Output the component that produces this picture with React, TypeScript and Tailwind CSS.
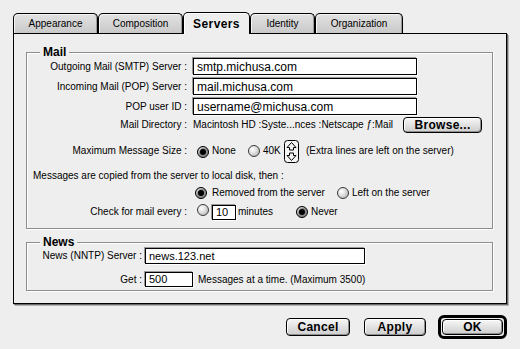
import React from 'react';

const tabs = [
  { label: 'Appearance', w: 'w-[85px]' },
  { label: 'Composition', w: 'w-[85px]' },
  { label: 'Servers', w: 'w-[67px]', active: true },
  { label: 'Identity', w: 'w-[65px]' },
  { label: 'Organization', w: 'w-[88px]' },
];

function Radio({ on }: { on?: boolean }) {
  if (on) {
    return (
      <span className="inline-flex shrink-0 w-[12px] h-[12px] rounded-full border border-black bg-[#8a8a8a] items-center justify-center shadow-[inset_1px_1px_0_#cfcfcf]">
        <span className="w-[6px] h-[6px] rounded-full bg-black" />
      </span>
    );
  }
  return (
    <span className="inline-block shrink-0 w-[12px] h-[12px] rounded-full border border-[#3a3a3a] bg-[radial-gradient(circle_at_35%_35%,#ffffff,#e6e6e6_35%,#a8a8a8)]" />
  );
}

function Field({ value, className, mono }: { value: string; className: string; mono?: boolean }) {
  return (
    <div
      className={`${className} shrink-0 border border-black bg-white flex items-center px-[3px] leading-none shadow-[-1px_-1px_0_#9a9a9a,1px_1px_0_#ffffff] ${
        mono ? 'text-[11px]' : 'text-[12px]'
      }`}
    >
      {value}
    </div>
  );
}

function Button({ label, className }: { label: string; className: string }) {
  return (
    <div
      className={`${className} shrink-0 rounded-[4px] border border-black bg-gradient-to-b from-[#f7f7f7] to-[#cdcdcd] shadow-[inset_1px_1px_0_#ffffff,inset_-1px_-1px_0_#8f8f8f] flex items-center justify-center font-bold text-[12px] leading-none tracking-[0.3px]`}
    >
      {label}
    </div>
  );
}

function Stepper() {
  return (
    <svg width="15" height="23" viewBox="0 0 15 23" className="shrink-0">
      <rect x="0.5" y="0.5" width="14" height="22" rx="3" fill="#f4f4f4" stroke="#000" />
      <path d="M7.5 2.5 L12 7.5 L9.5 7.5 L9.5 10 L5.5 10 L5.5 7.5 L3 7.5 Z" fill="none" stroke="#000" strokeWidth="1" />
      <path d="M7.5 20.5 L12 15.5 L9.5 15.5 L9.5 13 L5.5 13 L5.5 15.5 L3 15.5 Z" fill="none" stroke="#000" strokeWidth="1" />
    </svg>
  );
}

function Group({ title, className, children }: { title: string; className: string; children: React.ReactNode }) {
  return (
    <div
      className={`${className} relative w-[467px] border border-[#8c8c8c] shadow-[inset_1px_1px_0_#ffffff,1px_1px_0_#ffffff]`}
    >
      <span className="absolute -top-[8px] left-[13px] px-[3px] bg-[#eeeeee] font-bold text-[12px] leading-[14px]">
        {title}
      </span>
      {children}
    </div>
  );
}

export default function App() {
  return (
    <div className="w-[520px] h-[349px] bg-[#eeeeee] font-['Liberation_Sans',Arial,sans-serif] text-[10px] text-black overflow-hidden">
      {/* tabs */}
      <div className="flex items-end pl-[13px] pt-[12px] h-[33px]">
        {tabs.map((t) =>
          t.active ? (
            <div
              key={t.label}
              className={`${t.w} self-start relative z-10 h-[22px] rounded-t-[5px] border border-b-0 border-black bg-[#eeeeee] shadow-[inset_1px_1px_0_#ffffff] flex items-center justify-center font-bold text-[12px] tracking-[0.4px] leading-none`}
            >
              {t.label}
            </div>
          ) : (
            <div
              key={t.label}
              className={`${t.w} h-[20px] rounded-t-[5px] border border-b-0 border-black bg-gradient-to-b from-[#e2e2e2] to-[#c9c9c9] shadow-[inset_1px_1px_0_#f4f4f4,inset_-1px_0_0_#9a9a9a] flex items-center justify-center leading-none`}
            >
              {t.label}
            </div>
          )
        )}
      </div>

      {/* panel */}
      <div className="ml-[13px] w-[494px] h-[271px] border border-black bg-[#eeeeee] shadow-[1px_1px_0_#6a6a6a,2px_2px_0_#b5b5b5] pl-[12px] pt-[18px]">
        <Group title="Mail" className="h-[177px] pt-[5px]">
          <div className="flex items-center h-[17px]">
            <div className="w-[166px] pr-[6px] text-right leading-none">Outgoing Mail (SMTP) Server :</div>
            <Field value="smtp.michusa.com" className="w-[224px] h-[17px]" />
          </div>
          <div className="flex items-center h-[17px] mt-[3px]">
            <div className="w-[166px] pr-[6px] text-right leading-none">Incoming Mail (POP) Server :</div>
            <Field value="mail.michusa.com" className="w-[224px] h-[17px]" />
          </div>
          <div className="flex items-center h-[17px] mt-[3px]">
            <div className="w-[166px] pr-[6px] text-right leading-none">POP user ID :</div>
            <Field value="username@michusa.com" className="w-[224px] h-[17px]" />
          </div>
          <div className="flex items-center h-[16px] mt-[2px]">
            <div className="w-[166px] pr-[6px] text-right leading-none">Mail Directory :</div>
            <span className="w-[210px] shrink-0 leading-none whitespace-nowrap">
              Macintosh HD :Syste...nces :Netscape ƒ:Mail
            </span>
            <Button label="Browse..." className="w-[79px] h-[16px] text-[11px]" />
          </div>
          <div className="flex items-center h-[22px] mt-[7px]">
            <div className="w-[166px] pr-[6px] text-right leading-none">Maximum Message Size :</div>
            <span className="ml-[4px]">
              <Radio on />
            </span>
            <span className="ml-[3px] w-[36px] leading-none">None</span>
            <Radio />
            <span className="ml-[3px] w-[21px] leading-none">40K</span>
            <Stepper />
            <span className="ml-[7px] leading-none whitespace-nowrap">(Extra lines are left on the server)</span>
          </div>
          <div className="flex items-center h-[16px] mt-[6px] pl-[6px] leading-none">
            Messages are copied from the server to local disk, then :
          </div>
          <div className="flex items-center h-[16px] mt-[1px] pl-[168px]">
            <Radio on />
            <span className="ml-[5px] w-[125px] leading-none whitespace-nowrap">Removed from the server</span>
            <Radio />
            <span className="ml-[3px] leading-none whitespace-nowrap">Left on the server</span>
          </div>
          <div className="flex items-center h-[16px] mt-[3px]">
            <div className="w-[166px] pr-[6px] text-right leading-none">Check for mail every :</div>
            <span className="ml-[4px]">
              <Radio />
            </span>
            <span className="ml-[3px]">
              <Field value="10" className="w-[24px] h-[15px]" mono />
            </span>
            <span className="ml-[2px] w-[58px] leading-none">minutes</span>
            <Radio on />
            <span className="ml-[3px] leading-none">Never</span>
          </div>
        </Group>

        <Group title="News" className="h-[49px] mt-[13px] pt-[5px]">
          <div className="flex items-center h-[16px]">
            <div className="w-[118px] pr-[3px] text-right leading-none">News (NNTP) Server :</div>
            <Field value="news.123.net" className="w-[220px] h-[16px]" mono />
          </div>
          <div className="flex items-center h-[15px] mt-[8px]">
            <div className="w-[118px] pr-[3px] text-right leading-none">Get :</div>
            <Field value="500" className="w-[48px] h-[15px]" mono />
            <span className="ml-[5px] leading-none whitespace-nowrap">Messages at a time. (Maximum 3500)</span>
          </div>
        </Group>
      </div>

      {/* buttons */}
      <div className="flex items-center justify-end pr-[13px] mt-[11px] h-[24px]">
        <Button label="Cancel" className="w-[64px] h-[18px]" />
        <Button label="Apply" className="w-[62px] h-[18px] ml-[14px]" />
        <div className="ml-[12px] w-[69px] h-[24px] rounded-[6px] border-[3px] border-black p-[1px] bg-[#eeeeee]">
          <Button label="OK" className="w-full h-full" />
        </div>
      </div>
    </div>
  );
}
